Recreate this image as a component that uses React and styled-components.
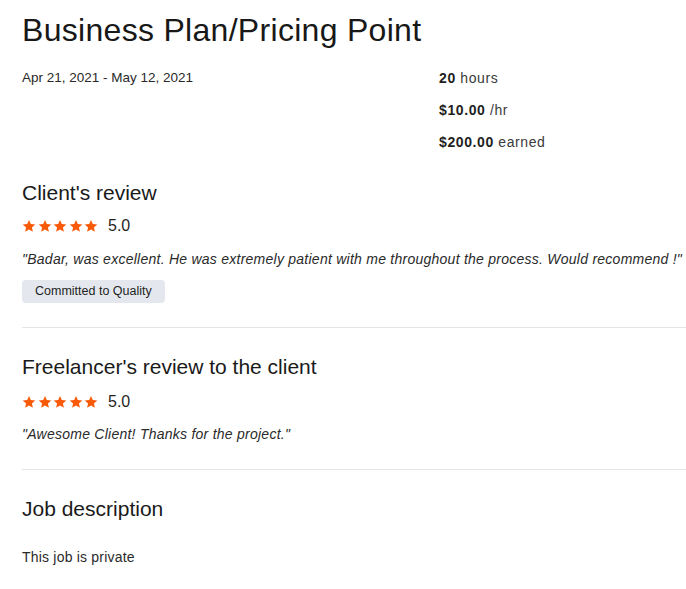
import React from 'react';
import styled, { createGlobalStyle } from 'styled-components';

const GlobalStyle = createGlobalStyle`
  html, body {
    margin: 0;
    padding: 0;
    background: #fff;
    overflow: hidden;
  }
  body {
    font-family: "Liberation Sans", Arial, sans-serif;
    color: #1f1f1f;
  }
`;

const Page = styled.div`
  width: 686px;
  padding: 11px 0 0 22px;
  box-sizing: border-box;
`;

const Title = styled.h1`
  margin: 0;
  font-size: 32px;
  font-weight: 400;
  line-height: 38px;
  letter-spacing: 0.3px;
  color: #181818;
`;

const Overview = styled.div`
  display: grid;
  grid-template-columns: 417px 1fr;
  margin-top: 21px;
`;

const DateText = styled.div`
  font-size: 13.5px;
  line-height: 16px;
  color: #2a2a2a;
`;

const Stats = styled.div`
  display: flex;
  flex-direction: column;
  gap: 16px;
`;

const Stat = styled.div`
  font-size: 14px;
  line-height: 16px;
  letter-spacing: 0.6px;
  color: #3a3a3a;

  b {
    font-weight: 700;
    color: #1f1f1f;
  }
`;

const Section = styled.section`
  padding: ${p => p.$top}px 0 ${p => p.$bottom}px;
  border-bottom: ${p => (p.$divider ? '1px solid #e4e4e4' : 'none')};
`;

const Heading = styled.h2`
  margin: 0;
  font-size: 21px;
  font-weight: 400;
  line-height: 24px;
  color: #1a1a1a;
`;

const RatingRow = styled.div`
  display: flex;
  align-items: center;
  margin-top: ${p => p.$gap}px;
  height: 20px;
`;

const Stars = styled.div`
  display: flex;
  gap: 1.5px;
  margin-right: 10px;
`;

const Score = styled.span`
  font-size: 16px;
  color: #1f1f1f;
`;

const Quote = styled.p`
  margin: ${p => p.$gap ?? 15}px 0 0;
  font-size: 14px;
  line-height: 17px;
  letter-spacing: 0.25px;
  font-style: italic;
  color: #2a2a2a;
`;

const Badge = styled.span`
  display: inline-block;
  margin-top: 12px;
  padding: 0 13px;
  height: 23px;
  line-height: 23px;
  font-size: 12.5px;
  color: #1f1f1f;
  background: #e4e8ee;
  border-radius: 4px;
`;

const Body = styled.p`
  margin: 28px 0 0;
  font-size: 14px;
  line-height: 17px;
  letter-spacing: 0.2px;
  color: #2a2a2a;
`;

const Star = () => (
  <svg width="14" height="14" viewBox="0 0 24 24">
    <path
      fill="#f95a08"
      d="M12 1.5l3.1 7.1 7.7.7-5.8 5.1 1.7 7.6L12 18l-6.7 4 1.7-7.6-5.8-5.1 7.7-.7z"
    />
  </svg>
);

const Rating = ({ value, gap }) => (
  <RatingRow $gap={gap}>
    <Stars>
      {[0, 1, 2, 3, 4].map(i => (
        <Star key={i} />
      ))}
    </Stars>
    <Score>{value}</Score>
  </RatingRow>
);

export default function App() {
  return (
    <>
      <GlobalStyle />
      <Page>
        <Title>Business Plan/Pricing Point</Title>
        <Overview>
          <DateText>Apr 21, 2021 - May 12, 2021</DateText>
          <Stats>
            <Stat><b>20</b> hours</Stat>
            <Stat><b>$10.00</b> /hr</Stat>
            <Stat><b>$200.00</b> earned</Stat>
          </Stats>
        </Overview>

        <Section $top={31} $bottom={24} $divider>
          <Heading>Client's review</Heading>
          <Rating value="5.0" gap={11} />
          <Quote>
            "Badar, was excellent. He was extremely patient with me throughout the process. Would recommend !"
          </Quote>
          <Badge>Committed to Quality</Badge>
        </Section>

        <Section $top={27} $bottom={26} $divider>
          <Heading>Freelancer's review to the client</Heading>
          <Rating value="5.0" gap={13} />
          <Quote $gap={14}>"Awesome Client! Thanks for the project."</Quote>
        </Section>

        <Section $top={27} $bottom={20}>
          <Heading>Job description</Heading>
          <Body>This job is private</Body>
        </Section>
      </Page>
    </>
  );
}
